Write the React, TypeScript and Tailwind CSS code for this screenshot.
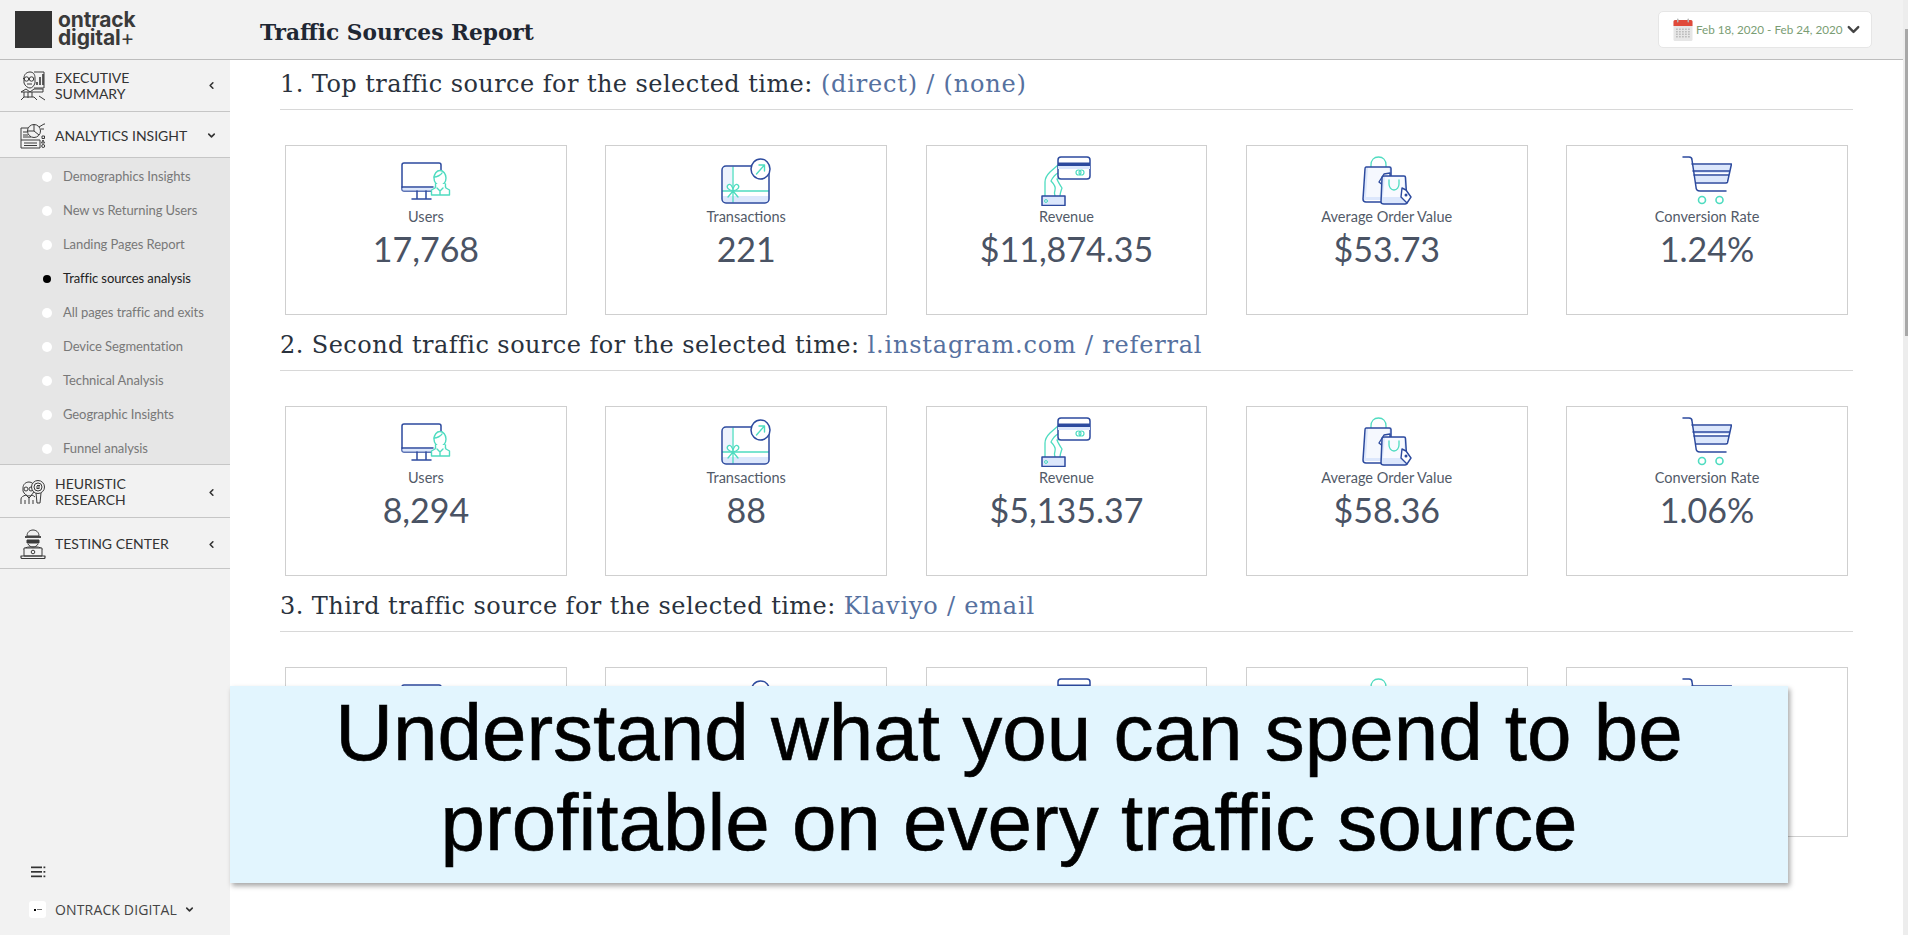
import React from "react";
import { ChevronLeft, ChevronDown } from "lucide-react";

const NAVY = "#2c4a9e";
const TEAL = "#4fdcc0";
const FILL = "#dce7fc";

function UsersIcon() {
  return (
    <svg width="50" height="50" viewBox="0 0 50 50" fill="none" strokeLinecap="round" strokeLinejoin="round">
      <rect x="1" y="7" width="39" height="28" rx="2" stroke={NAVY} strokeWidth="1.5" />
      <path d="M1 31h31" stroke={NAVY} strokeWidth="1.5" />
      <path d="M1.5 32h30v2.5h-30z" fill={FILL} />
      <path d="M16 35v7M25 35v7M11 43h19" stroke={NAVY} strokeWidth="1.5" />
      <ellipse cx="39" cy="22" rx="6" ry="7.5" fill="#fff" stroke={TEAL} strokeWidth="1.4" />
      <path d="M33 21c3 0 7-2 8-4M34.5 28c.3 2 .3 3-.5 4l-3.5 2v5h18v-5l-3.5-2c-.8-1-.8-2-.5-4M36 32l3 3 3-3M39 35v4" stroke={TEAL} strokeWidth="1.4" fill="#fff" />
    </svg>
  );
}

function TransactionsIcon() {
  return (
    <svg width="50" height="50" viewBox="0 0 50 50" fill="none" strokeLinecap="round" strokeLinejoin="round">
      <rect x="1" y="10" width="47" height="37" rx="4" fill="#fff" />
      <path d="M1.5 40h46v3a3.5 3.5 0 0 1-3.5 3.5H5A3.5 3.5 0 0 1 1.5 43z" fill={FILL} />
      <path d="M2 11h9v24H2z" fill={FILL} opacity=".5" />
      <path d="M12 11v35M1.5 35h46" stroke={TEAL} strokeWidth="1.3" />
      <path d="M12 35c-5-1-7-4-5-6s5 1 5 6c0-5 3-8 5-6s0 5-5 6zM12 35l-5 6M12 35l5 6" stroke={TEAL} strokeWidth="1.3" fill="#fff" />
      <rect x="1" y="10" width="47" height="37" rx="4" stroke={NAVY} strokeWidth="1.5" />
      <ellipse cx="39.5" cy="13" rx="9.5" ry="10" fill="#fff" stroke={NAVY} strokeWidth="1.5" />
      <path d="M35.5 18l8-9M38 9h5.5v6" stroke={TEAL} strokeWidth="1.4" />
    </svg>
  );
}

function RevenueIcon() {
  return (
    <svg width="50" height="50" viewBox="0 0 50 50" fill="none" strokeLinecap="round" strokeLinejoin="round">
      <path d="M17 9L9 16c-3 3-5 6-5 10v14M17 17c-2 1-5 4-7 8 3 3 5 6 4 9s-1 4 0 6M17 23h-1c1 3 3 6 5 9-1 3-2 5-2 8" stroke={TEAL} strokeWidth="1.3" />
      <rect x="17" y="1" width="32" height="22" rx="3" fill="#fff" stroke={NAVY} strokeWidth="1.5" />
      <path d="M17 6.5h32v3.5H17z" fill={NAVY} />
      <path d="M17 10h32v3H17z" fill={FILL} />
      <circle cx="37.5" cy="16.5" r="2.5" stroke={TEAL} strokeWidth="1.2" />
      <circle cx="40.5" cy="16.5" r="2.5" stroke={TEAL} strokeWidth="1.2" />
      <rect x="1" y="40" width="23" height="9.5" fill={FILL} stroke={NAVY} strokeWidth="1.5" />
      <circle cx="5" cy="45" r="1.5" stroke={TEAL} strokeWidth="1" />
    </svg>
  );
}

function OrderIcon() {
  return (
    <svg width="50" height="50" viewBox="0 0 50 50" fill="none" strokeLinecap="round" strokeLinejoin="round">
      <path d="M9 17V9c0-5 3-8 7.500-8S24 4 24 9v8" stroke={TEAL} strokeWidth="1.3" />
      <path d="M4 11h24c1 0 1.500.5 1.500 1.500L31 44H3c-1 0-2-1-2-2z" fill={FILL} />
      <path d="M6 11h21v30H4z" fill="#fff" opacity=".7" />
      <path d="M4 11h23.500c1 0 1.500.5 1.500 1.500V20M20 46H4c-2 0-3-1-3-3L3 13c0-1 .5-2 1-2" stroke={NAVY} strokeWidth="1.5" />
      <path d="M28 17l-6 1-5 8 5 4 6-8z" fill="#fff" stroke={NAVY} strokeWidth="1.4" />
      <circle cx="24" cy="22" r="1.500" fill={NAVY} />
      <path d="M22 20h20c1 0 1.500.5 1.500 1.500L45 46c0 1-1 2-2 2H22c-2 0-3-1-3-2l1-24c0-1 1-2 2-2z" fill={FILL} stroke={NAVY} strokeWidth="1.5" />
      <path d="M23 21h19l1 20H21z" fill="#fff" opacity=".8" />
      <path d="M27 24v4c0 3 2 6 5 6s5-3 5-6v-4" stroke={TEAL} strokeWidth="1.3" />
      <path d="M40 32l4 2 5 7-4 6-6-6z" fill="#fff" stroke={NAVY} strokeWidth="1.4" />
      <circle cx="44" cy="39" r="1.500" fill={NAVY} />
    </svg>
  );
}

function CartIcon() {
  return (
    <svg width="50" height="50" viewBox="0 0 50 50" fill="none" strokeLinecap="round" strokeLinejoin="round">
      <path d="M11 9h38l-2 8H12zM13 20h33l-2 6H14z" fill={FILL} />
      <path d="M1 1h6c2 0 3 1 3 3l4 27c0 3 1 4 4 4h26" stroke={NAVY} strokeWidth="1.5" />
      <path d="M10 8h39.500l-4 18c-.3 1-1 1-2 1H14M11 15h37M12 19h35" stroke={NAVY} strokeWidth="1.5" />
      <circle cx="20" cy="44" r="3.500" stroke={TEAL} strokeWidth="1.6" />
      <circle cx="37.500" cy="44" r="3.500" stroke={TEAL} strokeWidth="1.6" />
    </svg>
  );
}

const Ink = "#3a3a3a";

function ExecIcon() {
  return (
    <svg width="26" height="31" viewBox="0 0 26 31" fill="none" stroke={Ink} strokeWidth="1" strokeLinejoin="round">
      <path d="M14 2h10v16H14" />
      <path d="M17 12v3M20 7v8M23 4v11" strokeWidth="1.6" />
      <path d="M4 8c0-4 3-6 6-6s5 2 5 6v5c-1 3-3 5-5 5s-5-2-6-5z" />
      <circle cx="6.500" cy="9" r="2.200" />
      <circle cx="11.500" cy="9" r="2.200" />
      <path d="M8.700 9h.6M3 8.500h1.300M7 14h5M1 22l5-3 4 3 4-3h9v3H1zM4 22v5M12 22v5M8 22v6M1 30l3-3h10l3 3M19 26l6 4" />
    </svg>
  );
}

function AnalyticsIcon() {
  return (
    <svg width="26" height="26" viewBox="0 0 26 26" fill="none" stroke={Ink} strokeWidth="1" strokeLinejoin="round">
      <path d="M8 5H1v20h19V17" />
      <path d="M1 17h19M4 20h13M4 22.500h13" />
      <circle cx="14" cy="8" r="6.500" fill="#f2f2f2" />
      <path d="M14 8V1.500M14 8l5 4M14 8H7.500" />
      <path d="M19 4l5-3h1M21 6h3M3 9h4M3 12h5M3 14h8" />
      <rect x="22" y="13" width="2.500" height="2.500" />
      <path d="M23 17l1.500 3h-3z" />
      <circle cx="23.200" cy="23" r="1.500" />
    </svg>
  );
}

function HeurIcon() {
  return (
    <svg width="26" height="26" viewBox="0 0 26 26" fill="none" stroke={Ink} strokeWidth="1" strokeLinejoin="round">
      <path d="M3 9c0-4 3-6 6-6s5 2 5 5v4c-1 3-3 5-5 5s-5-2-6-5z" />
      <circle cx="6" cy="10" r="2" />
      <circle cx="11" cy="10" r="2" />
      <path d="M1 25v-5c0-2 2-3 5-4l3 3 3-3c1 .5 2 1 3 2M5 25v-4M13 25v-4M9 19v6" />
      <circle cx="18" cy="8" r="6.500" fill="#f2f2f2" />
      <circle cx="18" cy="8" r="4" />
      <path d="M16 8h4M17 6.500h3M16.500 9.500h3M16 14l1 10h3l1-10" />
    </svg>
  );
}

function TestIcon() {
  return (
    <svg width="26" height="30" viewBox="0 0 26 30" fill="none" stroke={Ink} strokeWidth="1" strokeLinejoin="round">
      <path d="M7 7c0-4 3-6 6-6s6 2 6 6H7z" />
      <path d="M5 8h16" strokeWidth="1.800" />
      <path d="M7 11h12v3H7z" fill={Ink} />
      <path d="M8 15c1 2 3 3 5 3s4-1 5-3" />
      <path d="M4 21c0-2 3-3 5-3h8c2 0 5 1 5 3" />
      <rect x="4" y="19" width="18" height="8" fill="#f2f2f2" />
      <circle cx="13" cy="23" r="1.800" />
      <path d="M1 27h24v1.500c0 .5-.5 1-1 1H2c-.5 0-1-.5-1-1z" strokeWidth="1.200" />
    </svg>
  );
}

function CalendarIcon() {
  return (
    <svg width="20" height="23" viewBox="0 0 20 23">
      <rect x="0.500" y="2" width="19" height="21" rx="1.500" fill="#e6e6e6" />
      <path d="M0.500 3.500A1.500 1.500 0 0 1 2 2h16a1.500 1.500 0 0 1 1.500 1.500V8H.5z" fill="#e04a3a" />
      <rect x="4" y="0.500" width="1.500" height="4" rx=".7" fill="#b8b8b8" />
      <rect x="14.500" y="0.500" width="1.500" height="4" rx=".7" fill="#b8b8b8" />
      {[10.500, 13, 15.500, 18].map((y) =>
        [3, 6, 9, 12, 15].map((x) => <rect key={`${x}-${y}`} x={x} y={y} width="1.800" height="1.500" fill="#bdbdbd" />)
      )}
    </svg>
  );
}

function NavRow({ icon, label, open, h }: { icon: React.ReactNode; label: React.ReactNode; open?: boolean; h: string }) {
  return (
    <div className={`flex items-center border-b border-[#c6c6c6] bg-[#f2f2f2] pl-[20px] pr-[13px] ${h}`}>
      <div className="flex w-[35px] shrink-0 items-center">{icon}</div>
      <div className="flex-1 text-[14px] leading-[16px] text-[#333]">{label}</div>
      {open ? (
        <ChevronDown size={11} strokeWidth={3.5} className="text-[#333]" />
      ) : (
        <ChevronLeft size={11} strokeWidth={3.5} className="text-[#333]" />
      )}
    </div>
  );
}

const subItems = [
  "Demographics Insights",
  "New vs Returning Users",
  "Landing Pages Report",
  "Traffic sources analysis",
  "All pages traffic and exits",
  "Device Segmentation",
  "Technical Analysis",
  "Geographic Insights",
  "Funnel analysis",
];

function Sidebar() {
  return (
    <aside className="flex w-[230px] shrink-0 flex-col bg-[#f2f2f2]">
      <NavRow h="h-[52px]" icon={<ExecIcon />} label={<>EXECUTIVE<br />SUMMARY</>} />
      <NavRow h="h-[46px] pt-[2px]" icon={<AnalyticsIcon />} label="ANALYTICS INSIGHT" open />
      <div className="flex h-[307px] flex-col overflow-hidden border-b border-[#c6c6c6] bg-[#e6e6e6] pt-[2px]">
        {subItems.map((t, i) => (
          <div key={t} className="flex h-[34px] shrink-0 items-center pl-[42px]">
            <span className={i === 3 ? "ml-[1px] mr-[11px] h-[8px] w-[8px] rounded-full bg-black" : "mr-[11px] h-[10px] w-[10px] rounded-full bg-white"} />
            <span className={`text-[13px] tracking-[-0.08px] ${i === 3 ? "ml-[1px] text-[#222]" : "text-[#787878]"}`}>{t}</span>
          </div>
        ))}
      </div>
      <NavRow h="h-[53px] pt-[2px]" icon={<HeurIcon />} label={<>HEURISTIC<br />RESEARCH</>} />
      <NavRow h="h-[51px] pt-[2px]" icon={<TestIcon />} label="TESTING CENTER" />
      <div className="flex-1" />
      <div className="flex h-[32px] items-center pl-[31px]">
        <svg width="15" height="12" viewBox="0 0 15 12" fill="#333">
          <rect x="0" y="0.500" width="11" height="1.700" />
          <rect x="0" y="5" width="11" height="1.700" />
          <rect x="0" y="9.500" width="11" height="1.700" />
          <rect x="12.500" y="0.500" width="1.800" height="1.700" />
          <rect x="12.500" y="5" width="1.800" height="1.700" />
          <rect x="12.500" y="9.500" width="1.800" height="1.700" />
        </svg>
      </div>
      <div className="mb-[17px] mt-[13px] flex h-[17px] items-center pl-[29px]">
        <div className="flex h-[17px] w-[17px] items-center justify-center rounded-[3px] bg-white text-[8px] leading-none text-[#333]">
          <span className="h-[2px] w-[2px] bg-black" />
          <span className="ml-[1px] h-[1px] w-[5px] bg-[#777]" />
        </div>
        <span className="ml-[9px] font-['Open_Sans'] text-[14px] tracking-[0.15px] text-[#444]">ONTRACK DIGITAL</span>
        <ChevronDown size={11} strokeWidth={3.5} className="ml-[7px] text-[#333]" />
      </div>
    </aside>
  );
}

type Card = { label: string; value: string };
const icons = [<UsersIcon />, <TransactionsIcon />, <RevenueIcon />, <OrderIcon />, <CartIcon />];

function Section({ title, source, cards }: { title: string; source: string; cards: Card[] }) {
  return (
    <section className="mb-[6px]">
      <h2 className="flex h-[50px] items-center border-b border-[#d8d8d8] pb-[1px] font-['DejaVu_Serif'] text-[24px] font-normal tracking-[0.44px] text-[#2a323d]">
        <span>
          {title} <span className="tracking-[0.8px] text-[#56719f]">{source}</span>
        </span>
      </h2>
      <div className="mt-[35px] grid grid-cols-5 gap-[38.4px] px-[5px]">
        {icons.map((ic, i) => (
          <div key={i} className="flex h-[170px] flex-col items-center border border-[#cfcfcf] bg-white pt-[10px]">
            {ic}
            {cards[i] && (
              <>
                <div className="h-[22px] text-[14.500px] leading-[22px] text-[#525a68]">{cards[i].label}</div>
                <div className="h-[42px] text-[34px] leading-[42px] text-[#4a5364]">{cards[i].value}</div>
              </>
            )}
          </div>
        ))}
      </div>
    </section>
  );
}

const labels = ["Users", "Transactions", "Revenue", "Average Order Value", "Conversion Rate"];
const toCards = (vals: string[]) => vals.map((value, i) => ({ label: labels[i], value }));

export default function App() {
  return (
    <div className="relative flex h-[935px] w-[1908px] overflow-hidden bg-white font-[Lato]">
      <div className="flex min-w-0 flex-1 flex-col">
        <header className="flex h-[60px] shrink-0 items-center border-b border-[#bdbdbd] bg-[#f2f2f2]">
          <div className="flex w-[230px] shrink-0 items-center pl-[15px]">
            <div className="h-[37px] w-[37px] bg-[#333]" />
            <div className="ml-[6px] pb-[2px] font-[Inter] text-[21px] font-bold leading-[18px] tracking-[-0.15px] text-[#3a3a3a]">
              ontrack
              <br />
              digital<span className="font-normal">+</span>
            </div>
          </div>
          <h1 className="ml-[30px] pt-[8px] font-['DejaVu_Serif'] text-[21.700px] font-bold text-[#1f2733]">Traffic Sources Report</h1>
          <div className="ml-auto mr-[31px] flex h-[37px] w-[214px] items-center rounded-[5px] border border-[#e6e6e6] bg-white pl-[14px]">
            <CalendarIcon />
            <span className="ml-[3px] whitespace-nowrap text-[11.700px] text-[#7a9d74]">Feb 18, 2020 - Feb 24, 2020</span>
            <ChevronDown size={19} strokeWidth={3} className="ml-[1px] text-[#444]" />
          </div>
        </header>
        <div className="flex min-h-0 flex-1">
          <Sidebar />
          <main className="min-w-0 flex-1 pl-[50px] pr-[50px]">
            <Section
              title="1. Top traffic source for the selected time:"
              source="(direct) / (none)"
              cards={toCards(["17,768", "221", "$11,874.35", "$53.73", "1.24%"])}
            />
            <Section
              title="2. Second traffic source for the selected time:"
              source="l.instagram.com / referral"
              cards={toCards(["8,294", "88", "$5,135.37", "$58.36", "1.06%"])}
            />
            <Section title="3. Third traffic source for the selected time:" source="Klaviyo / email" cards={[]} />
          </main>
        </div>
      </div>
      <div className="w-[5px] shrink-0 bg-[#ededed] pl-[2px] pt-[29px]">
        <div className="h-[307px] w-[3px] bg-[#a8a8a8]" />
      </div>
      <div className="absolute left-[230px] top-[686px] flex h-[197px] w-[1558px] items-center justify-center bg-[#e2f5fe] pb-[14px] text-center font-['Liberation_Sans'] text-[80px] leading-[90px] text-black shadow-[2px_3px_5px_rgba(0,0,0,0.35)] [-webkit-text-stroke:0.6px_#000]">
        <div>
          Understand what you can spend to be
          <br />
          profitable on every traffic source
        </div>
      </div>
    </div>
  );
}
